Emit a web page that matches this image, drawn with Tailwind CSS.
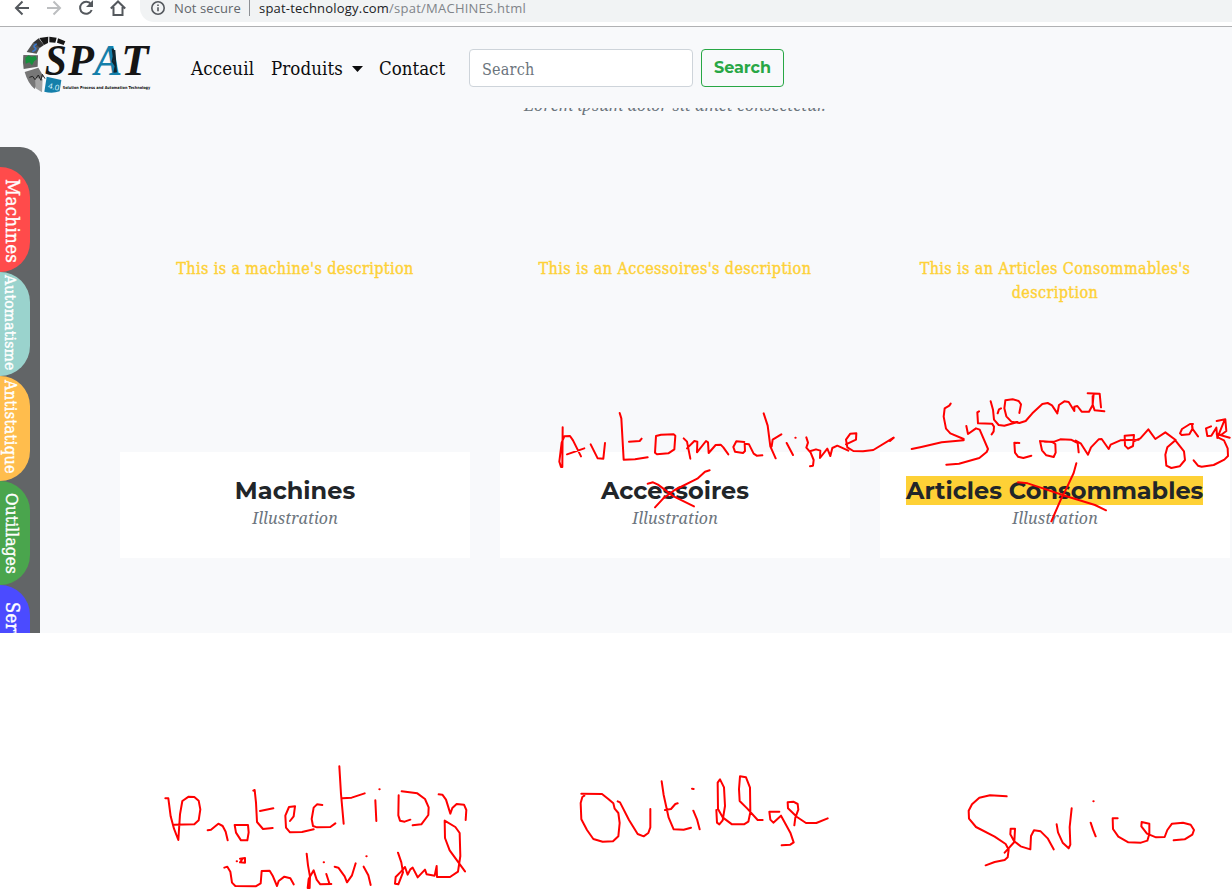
<!DOCTYPE html>
<html lang="fr">
<head>
<meta charset="utf-8">
<title>SPAT</title>
<script src="https://cdn.jsdelivr.net/npm/@tailwindcss/browser@4"></script>
</head>
<body class="relative flex h-[889px] w-[1232px] flex-col overflow-hidden bg-white font-['Roboto_Slab','DejaVu_Serif_Condensed','DejaVu_Serif',serif]">

<!-- Browser toolbar -->
<div class="flex h-[27px] shrink-0 items-start border-b border-[#b0b1b3] bg-white">
  <svg class="h-[26px] w-[140px] shrink-0" viewBox="0 0 140 26" fill="none" stroke="#54585d" stroke-width="2">
    <path d="M29 8H16M22.500 1.500L16 8l6.500 6.500"/>
    <path stroke="#bcbec0" d="M47 8h13M53.500 1.500L60 8l-6.500 6.500"/>
    <path d="M91 4.300A6 6 0 1 0 91.700 10"/><path fill="#54585d" stroke="none" d="M93 0v7h-7z"/>
    <path d="M110.800 8.500L118 1.500l7.200 7M113.500 7v8h9V7"/>
  </svg>
  <div class="flex h-[22px] flex-1 items-start rounded-bl-[14px] bg-[#f1f3f4] pl-[10px] font-['Open_Sans',sans-serif] text-[13px] leading-[16px]">
    <svg class="mt-px h-[15px] w-[15px]" viewBox="0 0 15 15" fill="none" stroke="#54585d" stroke-width="1.600"><circle cx="8" cy="7" r="6.200"/><path d="M8 6.200v4M8 3.500v1.600"/></svg>
    <span class="ml-[9px] w-[75px] tracking-[0.1px] whitespace-nowrap text-[#62666b]">Not secure</span>
    <span class="h-[16px] w-px bg-[#8d9094]"></span>
    <span class="ml-[9px] tracking-[0.240px] whitespace-nowrap text-[#808489]"><span class="tracking-[0.2px] text-[#202124]">spat-technology.com</span>/spat/MACHINES.html</span>
  </div>
</div>

<div class="flex h-[606px] shrink-0 flex-col bg-[#f8f9fb]">
  <!-- Navigation bar -->
  <nav class="flex h-[81px] shrink-0 items-start">
    <svg class="ml-[10px] h-[78px] w-[150px] shrink-0" viewBox="0 0 450 234">
      <g transform="translate(0 9)">
        <path fill="#555" d="M50 66L69 38 90 51 80 71z"/>
        <path fill="#333" d="M69 38L86 25 102 45 90 53z"/>
        <path fill="#161616" d="M88 24L115 20 114 39 102 45zM118 20l22 3-4 15-18-1zM144 25l22 9-5 11-20-7z"/>
        <path fill="#666" d="M40 75l44 1-1 34-42 7q-4-20-1-42z"/>
        <path fill="#777" d="M44 126l41-13 15 25-18 23-8 16q-21-18-30-51z"/>
        <path fill="#a5a5a5" d="M75 143l23 4-2 40-19-12z"/>
        <path fill="#147faa" d="M110 140l44 10-5 34q-23 8-46 1z"/>
        <path fill="none" stroke="#3a77c9" stroke-width="5" d="M80 41q-13 8-5 12t-8 12"/>
        <path fill="#16913d" d="M46 83l10-7 9 5 11-4 5 11-8 5-7 13-8-9-11 4z"/>
        <path fill="none" stroke="#222" stroke-width="3" d="M58 142l10-3 7 10 10-14 8 16 4-18 8 13"/>
        <text x="113" y="175" fill="#d9f5ff" font-family="Liberation Sans" font-size="24" transform="rotate(12 113 175)">4.0</text>
        <g font-family="Liberation Serif" font-style="italic" font-weight="bold" font-size="130" fill="#151515">
          <text x="104" y="134" textLength="66" lengthAdjust="spacingAndGlyphs">S</text>
          <text x="174" y="134" textLength="78" lengthAdjust="spacingAndGlyphs">P</text>
          <text x="253" y="134" fill="#147faa" textLength="84" lengthAdjust="spacingAndGlyphs">A</text>
          <text x="334" y="134" textLength="82" lengthAdjust="spacingAndGlyphs">T</text>
        </g>
        <path fill="none" stroke="#10242d" stroke-width="6" d="M308 56l3 23-3 15 9 14-4 20M313 60l5 67"/>
        <text x="158" y="178" font-family="DejaVu Sans" font-weight="bold" font-size="12" fill="#111" textLength="263" lengthAdjust="spacingAndGlyphs">Solution Process and Automation Technology</text>
      </g>
    </svg>
    <div class="ml-[31px] flex pt-[27px] text-[18.500px] leading-[30px] text-[#0c0c0d]">
      <a class="w-[80px] tracking-[0.2px] whitespace-nowrap">Acceuil</a>
      <a class="flex w-[108px] items-center gap-[8px] whitespace-nowrap"><span class="w-[73px] tracking-[0.1px]">Produits</span><svg class="h-[6px] w-[11px]" viewBox="0 0 11 6"><path fill="#0c0c0d" d="M0 0h11L5.500 6z"/></svg></a>
      <a class="w-[90px] whitespace-nowrap">Contact</a>
    </div>
    <div class="mt-[22px] flex h-[38px] w-[224px] items-center rounded border border-[#ced4da] bg-white px-3 pt-[3px] text-[16px] tracking-[0.2px] text-[#6c757d]">Search</div>
    <div class="mt-[22px] ml-2 flex h-[38px] w-[83px] items-center justify-center rounded border border-[#28a745] font-['Montserrat','Inter',sans-serif] text-[16px] leading-[20px] font-bold text-[#28a745]">Search</div>
  </nav>

  <div class="flex min-h-0 flex-1">
    <!-- Category rail -->
    <aside class="mt-[39px] flex w-[40px] shrink-0 flex-col overflow-hidden rounded-tr-[20px] bg-[#626567] pt-[20px] text-white [-webkit-text-stroke:0.4px]">
      <div class="h-[104.500px] w-[30px] shrink-0 rounded-r-[30px] bg-[#ff4b4b] pt-[12px]"><span class="block w-[24px] text-[18.500px] leading-[24px] tracking-[0.350px] whitespace-nowrap [writing-mode:vertical-rl]">Machines</span></div>
      <div class="h-[104.500px] w-[30px] shrink-0 rounded-r-[30px] bg-[#9ad3cd] pt-[3px]"><span class="block w-[20px] text-[15.500px] leading-[20px] tracking-[0.2px] whitespace-nowrap [writing-mode:vertical-rl]">Automatisme</span></div>
      <div class="h-[104.500px] w-[30px] shrink-0 rounded-r-[30px] bg-[#ffbd4d] pt-[4px]"><span class="block w-[20px] text-[16px] leading-[20px] tracking-[0.4px] whitespace-nowrap [writing-mode:vertical-rl]">Antistatique</span></div>
      <div class="h-[104.500px] w-[30px] shrink-0 rounded-r-[30px] bg-[#4aa54d] pt-[12px]"><span class="block w-[24px] text-[17px] leading-[24px] tracking-[0.2px] whitespace-nowrap [writing-mode:vertical-rl]">Outillages</span></div>
      <div class="h-[104.500px] w-[30px] shrink-0 rounded-r-[30px] bg-[#4b4bff] pt-[17px]"><span class="block w-[24px] text-[18px] leading-[24px] tracking-[0.350px] whitespace-nowrap [writing-mode:vertical-rl]">Services</span></div>
    </aside>

    <main class="flex flex-1 flex-col pl-[80px]">
      <div class="h-[149px] w-[1110px] shrink-0 overflow-hidden text-center">
        <p class="-mt-[15px] font-['Droid_Serif','Noto_Serif','DejaVu_Serif_Condensed',serif] text-[16px] leading-[24px] tracking-[0.1px] text-[#6c757d] italic">Lorem ipsum dolor sit amet consectetur.</p>
      </div>
      <div class="grid w-[1110px] grid-cols-3 gap-[30px] text-center">
        <section>
          <p class="h-[195px] text-[16px] leading-[24px] tracking-[0.4px] text-[#fed136] [-webkit-text-stroke:0.4px]">This is a machine's description</p>
          <div class="h-[106px] bg-white pt-[24px]">
            <h4 class="font-['Montserrat','Inter',sans-serif] text-[24px] leading-[29px] font-bold text-[#212529]">Machines</h4>
            <p class="font-['Droid_Serif','Noto_Serif','DejaVu_Serif_Condensed',serif] text-[16px] leading-[26px] tracking-[0.1px] text-[#6c757d] italic">Illustration</p>
          </div>
        </section>
        <section>
          <p class="h-[195px] text-[16px] leading-[24px] tracking-[0.4px] text-[#fed136] [-webkit-text-stroke:0.4px]">This is an Accessoires's description</p>
          <div class="h-[106px] bg-white pt-[24px]">
            <h4 class="font-['Montserrat','Inter',sans-serif] text-[24px] leading-[29px] font-bold text-[#212529]">Accessoires</h4>
            <p class="font-['Droid_Serif','Noto_Serif','DejaVu_Serif_Condensed',serif] text-[16px] leading-[26px] tracking-[0.1px] text-[#6c757d] italic">Illustration</p>
          </div>
        </section>
        <section>
          <p class="h-[195px] text-[16px] leading-[24px] tracking-[0.4px] text-[#fed136] [-webkit-text-stroke:0.4px]">This is an Articles Consommables's<br>description</p>
          <div class="h-[106px] bg-white pt-[24px]">
            <h4 class="ml-[26px] w-[297px] bg-[#fed136] font-['Montserrat','Inter',sans-serif] text-[24px] leading-[29px] font-bold whitespace-nowrap text-[#212529]">Articles Consommables</h4>
            <p class="font-['Droid_Serif','Noto_Serif','DejaVu_Serif_Condensed',serif] text-[16px] leading-[26px] tracking-[0.1px] text-[#6c757d] italic">Illustration</p>
          </div>
        </section>
      </div>
    </main>
  </div>
</div>

<!-- Handwritten annotations -->
<svg class="absolute inset-0 h-[889px] w-[1232px]" viewBox="0 0 1232 889" fill="none" stroke="#ff0000" stroke-width="6" stroke-linecap="round" stroke-linejoin="round">
  <g transform="translate(550 400) scale(.33333)">
    <path d="M38 82L37 201H33L28 185 35 128 43 109 60 108 69 121 93 169M51 163L103 145M122 133L143 175 160 176 165 129"/>
    <path d="M209 39L214 55 221 179 255 178 293 172M237 125L269 123 275 116M318 108L315 158 321 163 355 160 373 148 376 107 371 103 333 104 318 108M401 115L411 125 421 176M411 145L433 123 442 125 441 157 468 123 474 127 476 159 497 135 512 134 520 142 535 163"/>
    <path d="M583 126L559 124 550 141 555 155 579 159 585 153 584 131 597 133 611 161 620 167 637 166M641 40L653 77 661 139 677 175M665 139L668 119 694 103M710 129L729 165M736 113h1M769 112L774 128 769 143 782 158 791 180 789 197 780 199M782 153L798 148 811 152 810 174 832 146 841 168 847 144 862 137 895 152M888 133L918 119 919 100 901 101 888 119 892 142 910 153 939 154 970 150 1031 113"/>
    <path d="M293 251L309 247 324 254 371 289 432 319M315 322L340 295 374 270 442 236 465 215 479 211"/>
  </g>
  <g transform="translate(890 380) scale(.33333)">
    <path d="M0 183l10-9M182 71L178 77 164 85 161 110 168 146 181 160 221 177V181L155 187 94 201 65 207M229 138L234 162 258 145 269 149 294 207 290 216 268 234 207 251 169 254M267 94L262 97 264 130 306 131 312 140 311 154 305 163M302 64L309 89 312 119 326 135 343 137 383 126M323 100L327 88 333 85M346 62L343 85 349 109 364 125 388 129 407 123 427 100 457 72 473 69 486 76 502 100M346 61L368 58 386 63 393 73 388 99M503 96L507 75 523 64 536 66 553 93 553 80 562 78 575 95 597 95 608 75 608 48M593 40L629 41 633 82M611 41L608 74 614 91 643 94"/>
    <path d="M388 189L373 188 375 218 384 230 400 234 424 227M450 183L456 211 469 226 491 231 497 218 496 192 486 186 450 183M463 185L493 185 511 178 543 179 563 189 566 217M557 182L573 191 594 224 603 202 626 178 635 177 656 207 662 194 691 181 746 179M704 167L705 197 714 206 729 198 732 165 704 167M733 183L751 175 775 148 796 177 826 157 857 180 832 202 826 224 829 257 844 264 869 259 885 240 882 214 856 181M909 132L900 132 876 147 870 160 875 165 898 163 907 147 906 132 908 147 924 169M963 139L948 145 952 168 964 167 979 143 982 174 1003 122M980 123L1006 118 1009 153 993 165 980 162 1019 173M985 173L1002 181 1013 205 1014 228 1003 239 971 255 935 260 924 257 911 241"/>
    <path d="M559 250L551 279 532 320 511 362 484 424M384 307L413 310 459 325 527 348 615 375 648 391"/>
  </g>
  <g transform="translate(155 755) scale(.33333)">
    <path d="M31 130H40L47 184 57 221 70 255 75 178 82 138 101 125 118 126 131 137 136 163 131 196 118 208 58 209M158 226L168 224 190 206 203 213 212 230 218 256M239 210L243 233 258 256H277L281 232 279 210 239 210M295 107L299 105 303 143 306 201 324 222 353 219M315 168L355 160M405 198L416 184 420 154 402 156 391 182 393 218 405 232 441 231 476 223M502 150L486 148 476 158 470 192 474 213 486 217 526 216 541 205M553 34L558 117 566 206M562 130L590 128 629 115M661 136L664 198M673 103h1M740 109L787 115 810 132 821 157 820 180 799 208 773 211M731 121L730 181 735 197 749 200 766 194M851 118L862 119 873 134 886 176 892 159 905 147 927 149 934 165 932 195"/>
    <path d="M208 338L217 335 226 350 231 383 241 393 302 394 317 385 320 348 344 347 353 362 366 393 371 378 388 365 406 370 416 388M245 319h1M255 311L270 309 270 323 255 322 263 311M455 296L459 331 465 365 464 399H458L461 372 476 346 485 374 496 388 529 387M514 357L523 385M506 322h1M539 335L550 338 569 364 576 382 591 361 602 325M626 335L640 361 647 390M634 304h1M729 293L739 322 744 352 730 388 720 386 722 366 738 350 750 336 758 359 766 343 773 338 788 367 810 344 815 358 839 362 845 333 846 366 885 366 909 350 916 303 914 234 901 216 869 197 870 249 884 286 913 326 930 349"/>
  </g>
  <g transform="translate(570 765) scale(.33333)">
    <path d="M34 86L96 87 114 101 130 115 134 131 145 144 149 174 145 214 129 229 98 230 70 222 51 195 34 163 32 114 37 96 43 92M143 109L150 112 177 165 203 207 221 214 235 204 241 187V132M275 49L281 90 296 158 311 193 341 194 363 188M285 135L303 132 316 117 323 115M366 71L371 72M370 137L381 163 389 193M439 135L441 173 448 178 458 166 465 123 462 67 450 43 443 53 444 132 458 157 486 178H522L535 170 541 142 540 68 528 37 510 34 507 72 509 108 532 131 563 165H578M628 140L598 140 601 164 610 173 633 152 645 174 661 203 671 232 661 239 635 241M673 181L676 158 685 134 683 117 670 110 653 112 654 130 681 156 708 174 739 174 773 160"/>
  </g>
  <g transform="translate(955 785) scale(.33333)">
    <path d="M155 34L105 31 73 38 51 58 41 77 42 101 63 126 119 155 152 177 161 194 158 217 149 225 119 231 92 241M149 203L178 171 180 131 167 131 166 148 177 168 197 184 226 193 228 153 237 136 257 139 278 160 296 193M305 118L309 142 323 173 341 190 346 179 344 126 350 70M407 113L414 134 422 154M415 49h1M488 100H473L474 132 490 155 520 172 558 173 577 167 583 147 583 116 560 111 559 124 576 146 603 157 629 156 637 135 651 116 684 113 707 119 717 135 712 149 689 163 656 166"/>
  </g>
</svg>
</body>
</html>
